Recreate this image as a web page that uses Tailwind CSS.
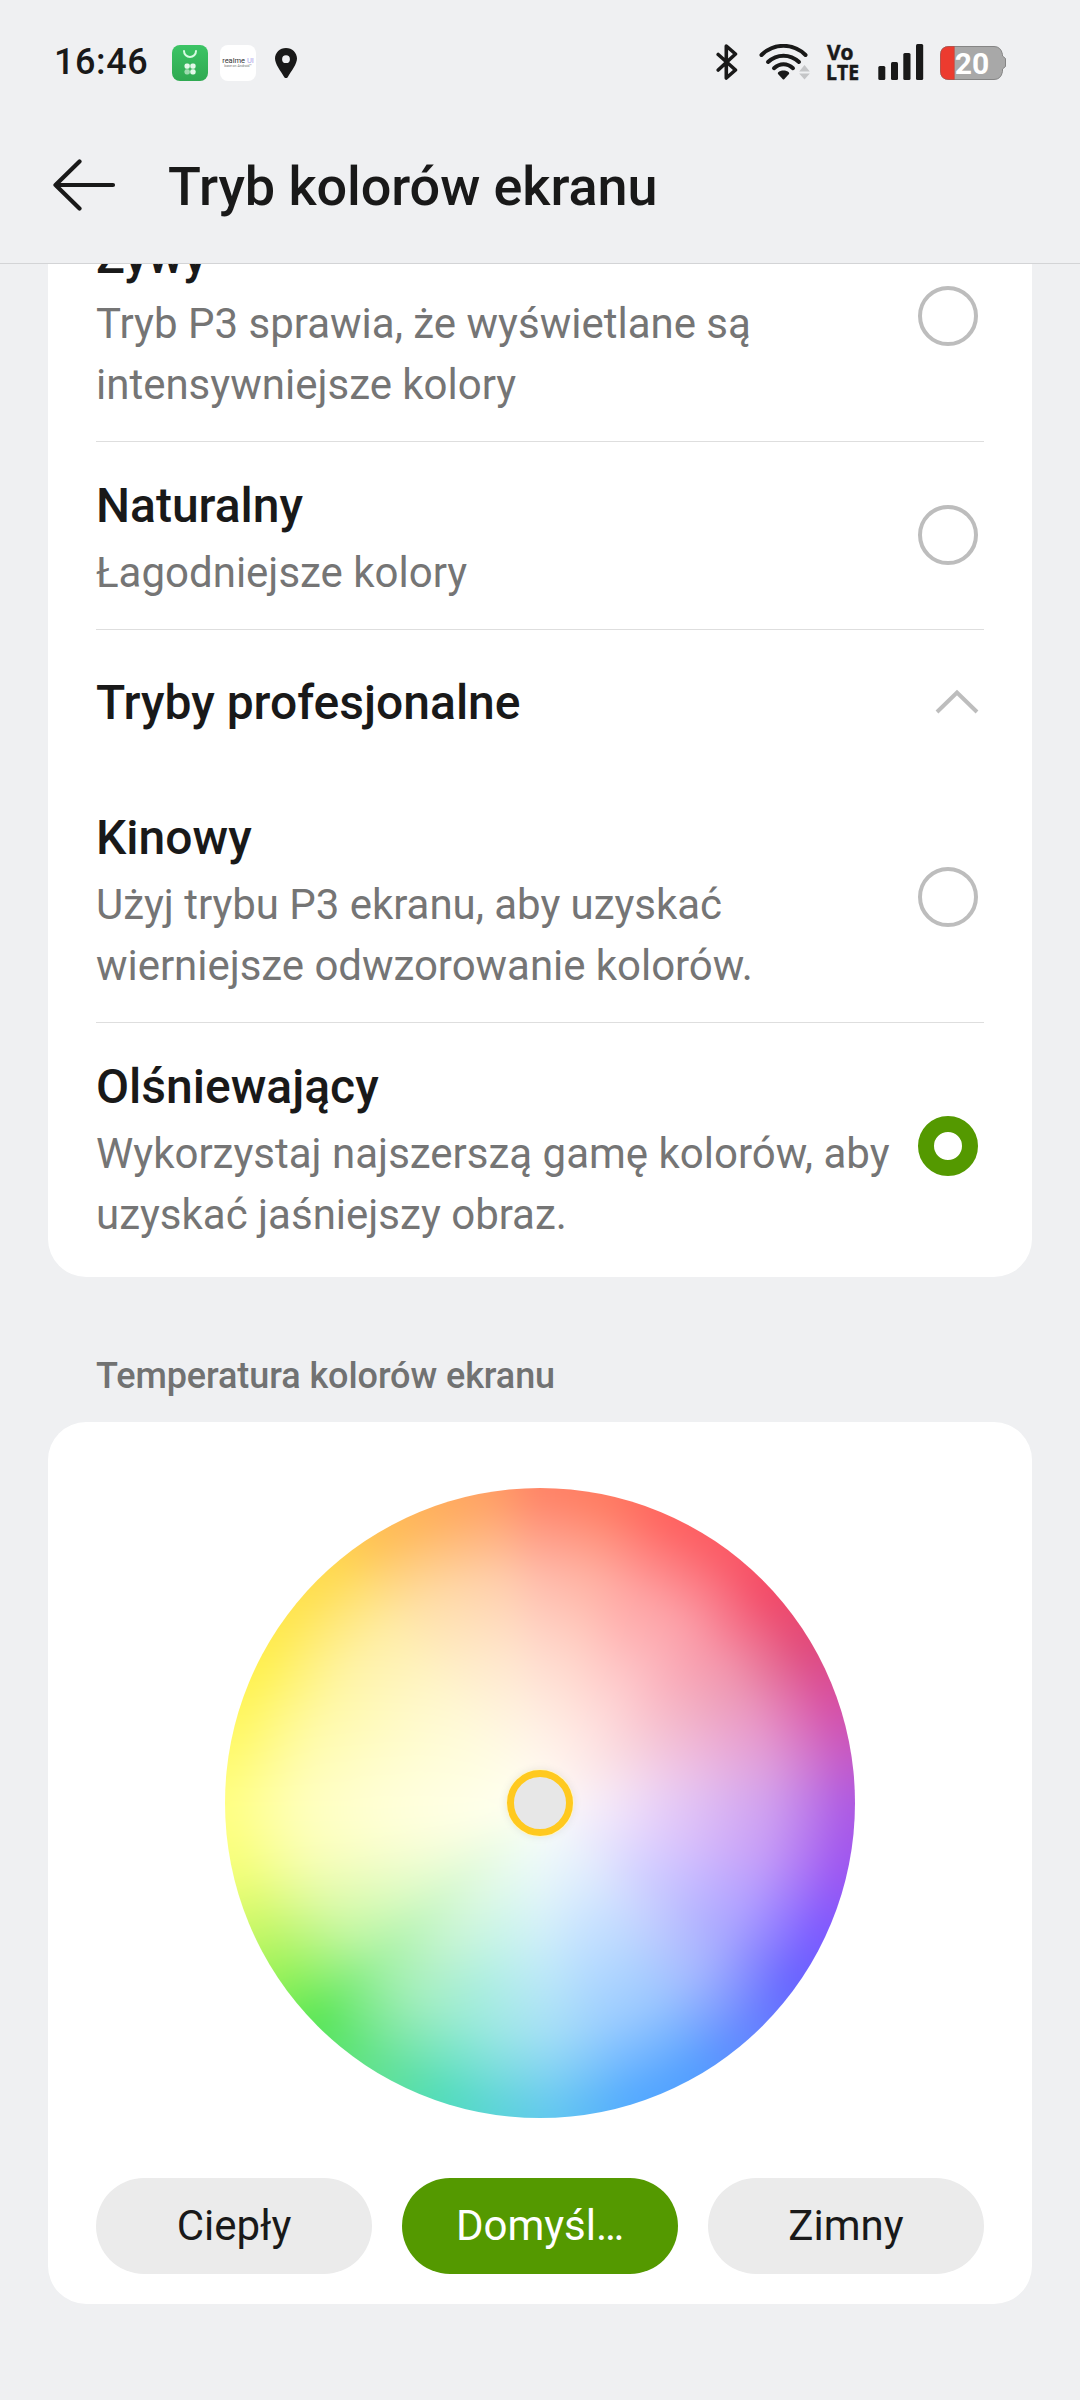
<!DOCTYPE html>
<html lang="pl">
<head>
<meta charset="utf-8">
<title>Tryb kolorów ekranu</title>
<script src="https://cdn.jsdelivr.net/npm/@tailwindcss/browser@4"></script>
</head>
<body class="bg-[#eff0f2] font-['Roboto',sans-serif] text-[#191919]">
<div class="w-[1080px] h-[2400px] overflow-hidden flex flex-col">
  <header class="h-[264px] shrink-0 border-b border-[#d3d4d6] bg-[#eff0f2] relative z-10">
    <div class="h-[108px] pt-[18px] pl-[54px] pr-[73px] flex items-center justify-between">
      <div class="flex items-center">
        <span class="w-[118px] -mt-[2px] text-[36px] font-medium leading-[48px] tracking-[0.6px]">16:46</span>
        <svg width="36" height="36" viewBox="0 0 36 36">
          <defs><linearGradient id="bag" x1="0" y1="0" x2="0" y2="1"><stop offset="0" stop-color="#3cc465"/><stop offset="1" stop-color="#2fa951"/></linearGradient></defs>
          <rect width="36" height="36" rx="8" fill="url(#bag)"/>
          <path d="M12 6a6 6 0 0 0 12 0" fill="none" stroke="#d8fbe2" stroke-width="2" stroke-linecap="round"/>
          <g fill="#e4f8e9"><rect x="12.5" y="18.500" width="5.300" height="5.300" rx="2"/><rect x="18.300" y="18.500" width="5.300" height="5.300" rx="2"/><rect x="12.500" y="24.300" width="5.300" height="5.300" rx="2" opacity=".6"/><rect x="18.300" y="24.300" width="5.300" height="5.300" rx="2"/></g>
        </svg>
        <div class="ml-3 w-9 h-9 rounded-lg bg-white flex flex-col items-center justify-center whitespace-nowrap overflow-hidden">
          <span class="text-[7.500px] leading-[7px] text-[#333]">realme <span class="text-[#a9a3ea]">UI</span></span>
          <span class="text-[3.500px] leading-[5px] text-[#777]">base on Android™</span>
        </div>
        <svg class="ml-[19px]" width="22" height="32" viewBox="0 0 22 32"><path fill="#191919" fill-rule="evenodd" d="M11 1C4.800 1 0 5.700 0 11.600 0 17 5.500 24 9.300 30.200c.8 1.200 2.600 1.200 3.400 0C16.500 24 22 17 22 11.600 22 5.700 17.200 1 11 1Zm0 7.300a3.900 3.900 0 1 1 0 7.800 3.900 3.900 0 0 1 0-7.800Z"/></svg>
      </div>
      <div class="flex items-center -mt-[2px]">
        <svg width="22" height="36" viewBox="0 0 22 36" fill="none" stroke="#191919" stroke-width="3.600" stroke-linejoin="round" stroke-linecap="round"><path d="M2.200 10.500 19.500 26 10.300 34V2l9.200 8L2.200 26"/></svg>
        <svg class="ml-[21px]" width="51" height="36" viewBox="0 0 51 36"><g fill="none" stroke="#191919" stroke-width="4" stroke-linecap="round"><path d="M2.500 11C15-1.200 34-1.200 46.500 11"/><path d="M9 18c9-8.500 22-8.500 31 0"/><path d="M15 24.200c5.800-5.300 13.200-5.300 19 0"/></g><path d="M19 28.500c3-2.600 8-2.600 11 0l.2 1.300-5 5.500q-.7.600-1.400 0l-5-5.500Z" fill="#191919"/><path d="M45.500 21l5.300 6.500H40.200ZM45.500 35.500l5.300-6H40.200Z" fill="#c4c5c7"/></svg>
        <svg class="ml-[16px] overflow-visible" width="34" height="36" viewBox="0 0 34 36" fill="#191919" stroke="#191919" stroke-width=".5" font-family="Open Sans" font-weight="700" font-size="22"><text x="1" y="15.600" textLength="26.500" lengthAdjust="spacingAndGlyphs">Vo</text><text x="0" y="35.700" textLength="33" lengthAdjust="spacingAndGlyphs">LTE</text></svg>
        <svg class="ml-[18px]" width="46" height="36" viewBox="0 0 46 36" fill="#191919"><rect x="0.300" y="22" width="7" height="14" rx="1.500"/><rect x="13" y="18" width="7" height="18" rx="1.500"/><rect x="25.300" y="9" width="7.200" height="27" rx="1.500"/><rect x="38" y="0" width="7.200" height="36" rx="1.500"/></svg>
        <svg class="ml-4" width="67" height="36" viewBox="0 0 67 36">
          <path d="M9 2.500H54q7 0 8.500 8v1.500l3 2.500v8l-3 2.500V27.500q-1.500 8-8.500 8H9q-8.500 0-8.500-8.500V11Q.5 2.500 9 2.500Z" fill="#a8a8a8" stroke="#858585"/>
          <path d="M14.300 2.500H9Q.5 2.500.5 11V27Q.5 35.500 9 35.500h5.300Z" fill="#ec3b2f" stroke="#b8483f" stroke-width=".6"/>
          <text x="32" y="30" text-anchor="middle" fill="#fff" font-family="Roboto" font-weight="700" font-size="30">20</text>
        </svg>
      </div>
    </div>
    <div class="h-[154px] pl-[53px] flex items-center">
      <svg width="63" height="54" viewBox="0 0 63 54" fill="none" stroke="#191919" stroke-width="4.200" stroke-linecap="round" stroke-linejoin="round"><path d="M60 27H2.500M26.500 3.500 2.500 27l24 23.500"/></svg>
      <h1 class="ml-[52px] mt-[3px] text-[54px] font-medium leading-[64px] tracking-[-0.08px]">Tryb kolorów ekranu</h1>
    </div>
  </header>

  <main class="flex flex-col px-12">
    <section class="-mt-[72px] bg-white rounded-[38px] px-12 pb-[6px]">
      <div class="h-[250px] pt-[35px] border-b border-[#dedede] relative">
        <h2 class="text-[48px] font-medium leading-[60px]">Żywy</h2>
        <p class="mt-[6px] w-[800px] text-[42px] leading-[61px] text-[#757575]">Tryb P3 sprawia, że wyświetlane są<br>intensywniejsze kolory</p>
        <span class="absolute right-[6px] top-[94px] size-[60px] rounded-full border-4 border-[#bdbdbd]"></span>
      </div>
      <div class="h-[188px] pt-[34px] border-b border-[#dedede] relative">
        <h2 class="text-[48px] font-medium leading-[60px]">Naturalny</h2>
        <p class="mt-[6px] text-[42px] leading-[61px] text-[#757575]">Łagodniejsze kolory</p>
        <span class="absolute right-[6px] top-[63px] size-[60px] rounded-full border-4 border-[#bdbdbd]"></span>
      </div>
      <div class="h-[144px] flex items-center justify-between pr-[5px]">
        <h2 class="mt-[2px] text-[48px] font-medium leading-[60px]">Tryby profesjonalne</h2>
        <svg width="44" height="26" viewBox="0 0 44 26" fill="none" stroke="#bdbdbd" stroke-width="4"><path d="M2 23 22 3.500 42 23"/></svg>
      </div>
      <div class="h-[249px] pt-[34px] border-b border-[#dedede] relative">
        <h2 class="text-[48px] font-medium leading-[60px]">Kinowy</h2>
        <p class="mt-[6px] text-[42px] leading-[61px] tracking-[-0.04px] text-[#757575]">Użyj trybu P3 ekranu, aby uzyskać<br>wierniejsze odwzorowanie kolorów.</p>
        <span class="absolute right-[6px] top-[93px] size-[60px] rounded-full border-4 border-[#bdbdbd]"></span>
      </div>
      <div class="h-[248px] pt-[34px] relative">
        <h2 class="text-[48px] font-medium leading-[60px]">Olśniewający</h2>
        <p class="mt-[6px] text-[42px] leading-[61px] text-[#757575]">Wykorzystaj najszerszą gamę kolorów, aby<br>uzyskać jaśniejszy obraz.</p>
        <span class="absolute right-[6px] top-[93px] size-[60px] rounded-full border-[16px] border-[#549900] bg-white"></span>
      </div>
    </section>

    <h3 class="mt-[75px] ml-12 text-[36px] font-medium leading-[48px] tracking-[-0.08px] text-[#717272]">Temperatura kolorów ekranu</h3>

    <section class="mt-[22px] h-[882px] bg-white rounded-[38px] px-12 pt-[66px] flex flex-col items-center">
      <div class="size-[630px] rounded-full relative isolate overflow-hidden flex items-center justify-center">
        <div class="absolute -inset-[30px] -z-10 blur-[13px] bg-[radial-gradient(circle_at_36%_44%,rgba(255,255,228,0.45),rgba(255,255,228,0)_38%),radial-gradient(closest-side,rgba(255,255,255,1)_0%,rgba(255,255,255,0.81)_23%,rgba(255,255,255,0.61)_46%,rgba(255,255,255,0.41)_67%,rgba(255,255,255,0.13)_82%,rgba(255,255,255,0)_89%),conic-gradient(#ff8468_0deg,#ff7c62_12deg,#ff6460_24deg,#fa5a68_38deg,#f24a68_48deg,#e04a7c_60deg,#d650a6_72deg,#c45ac8_82deg,#ae5ae2_90deg,#9c56f2_103deg,#7c5aff_115deg,#6864ff_125deg,#6486ff_138deg,#549eff_150deg,#54aaff_163deg,#64c8f0_178deg,#5cd4d8_188deg,#52dcbc_198deg,#62e290_212deg,#5ae656_226deg,#9af25a_237deg,#ccf868_247deg,#f0fe78_256deg,#fcff80_263deg,#ffff84_270deg,#fff862_284deg,#fff04c_296deg,#ffe44e_308deg,#ffd850_319deg,#ffc056_329deg,#ffae5e_341deg,#ffa066_351deg,#ff8468_360deg)]"></div>
        <span class="size-[66px] rounded-full border-[7px] border-[#ffc91f] bg-[#e7e7e7] shadow-[0_0_0_1px_#fff6c8,0_0_10px_rgba(0,0,0,0.1)]"></span>
      </div>
      <div class="mt-[60px] w-full grid grid-cols-3 gap-[30px] text-[42px] leading-[96px] text-center">
        <span class="h-24 rounded-full bg-[#ebebeb]">Ciepły</span>
        <span class="h-24 rounded-full bg-[#549900] text-white">Domyśl…</span>
        <span class="h-24 rounded-full bg-[#ebebeb]">Zimny</span>
      </div>
    </section>
  </main>
</div>
</body>
</html>
